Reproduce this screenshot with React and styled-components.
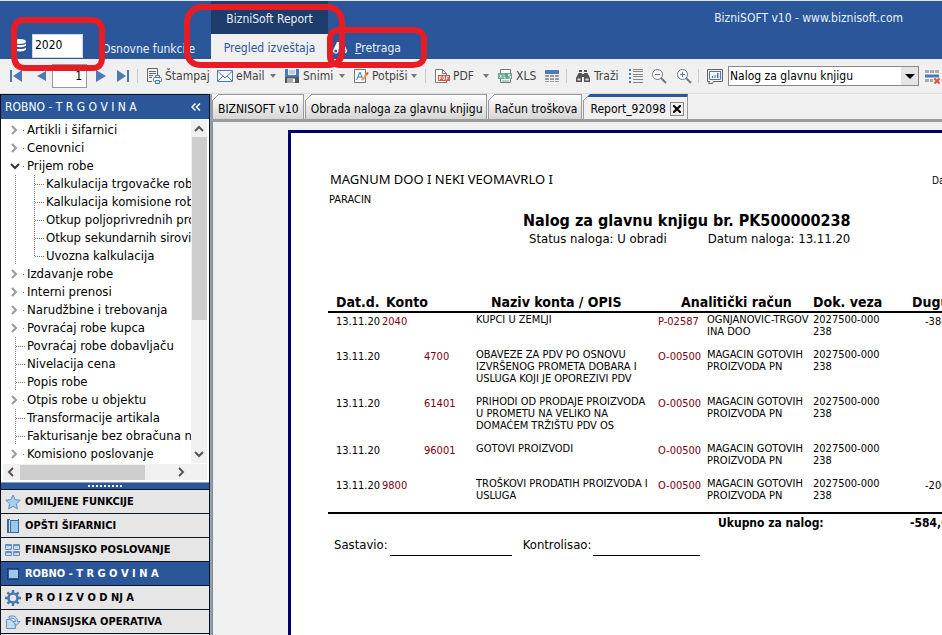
import React, { useState } from "react";
import styled, { createGlobalStyle } from "styled-components";

const treeItems = [
  { label: "Artikli i šifarnici", arrow: "right" },
  { label: "Cenovnici", arrow: "right" },
  { label: "Prijem robe", arrow: "down" },
  { label: "Kalkulacija trgovačke robe", child: true },
  { label: "Kalkulacija komisione robe", child: true },
  { label: "Otkup poljoprivrednih proizvoda", child: true },
  { label: "Otkup sekundarnih sirovina", child: true },
  { label: "Uvozna kalkulacija", child: true, last: true },
  { label: "Izdavanje robe", arrow: "right" },
  { label: "Interni prenosi", arrow: "right" },
  { label: "Narudžbine i trebovanja", arrow: "right" },
  { label: "Povraćaj robe kupca", arrow: "right" },
  { label: "Povraćaj robe dobavljaču" },
  { label: "Nivelacija cena" },
  { label: "Popis robe" },
  { label: "Otpis robe u objektu", arrow: "right" },
  { label: "Transformacije artikala" },
  { label: "Fakturisanje bez obračuna nabavke" },
  { label: "Komisiono poslovanje", arrow: "right" }
];

const modules = [
  { label: "OMILJENE FUNKCIJE", icon: "star" },
  { label: "OPŠTI ŠIFARNICI", icon: "book" },
  { label: "FINANSIJSKO POSLOVANJE", icon: "windows" },
  { label: "ROBNO - T R G O V I N A", icon: "square" },
  { label: "P R O I Z V O D NJ A", icon: "gear" },
  { label: "FINANSIJSKA OPERATIVA", icon: "pipe" }
];

const tabs = ["BIZNISOFT v10", "Obrada naloga za glavnu knjigu", "Račun troškova", "Report_92098"];

const pn = ["MAGACIN GOTOVIH", "PROIZVODA PN"];
const rows = [
  { konto: "2040", opis: ["KUPCI U ZEMLJI"], code: "P-02587", racun: ["OGNJANOVIC-TRGOV", "INA DOO"], duguje: "-384,000.00" },
  { konto: "4700", sub: true, opis: ["OBAVEZE ZA PDV PO OSNOVU", "IZVRŠENOG PROMETA DOBARA I", "USLUGA KOJI JE OPOREZIVI PDV"], code: "O-00500", racun: pn },
  { konto: "61401", sub: true, opis: ["PRIHODI OD PRODAJE PROIZVODA", "U PROMETU NA VELIKO NA", "DOMAĆEM TRŽIŠTU PDV OS"], code: "O-00500", racun: pn },
  { konto: "96001", sub: true, opis: ["GOTOVI PROIZVODI"], code: "O-00500", racun: pn },
  { konto: "9800", opis: ["TROŠKOVI PRODATIH PROIZVODA I", "USLUGA"], code: "O-00500", racun: pn, duguje: "-200,000.00" }
];

// every drawing sits on a 16x16 grid
const icons = {
  first: <path d="M2 2h2v12H2zM14 2v12L5 8z" fill="#4a7ab5" />,
  prev: <path d="M13 3v10L4 8z" fill="#4a7ab5" />,
  next: <path d="M3 2v12l10-6z" fill="#4a7ab5" />,
  last: <path d="M2 2v12l9-6zM12 2h2v12h-2z" fill="#4a7ab5" />,
  print: (
    <g fill="none" stroke="#666">
      <path d="M6 13.500H1.500v-13h10V7" />
      <path d="M3 3.500h7M3 5.500h7M3 7.500h4M3 9.500h3" />
      <g stroke="#4a7ab5">
        <path d="M9.500 9.500v-2h4v2" />
        <rect x="7.500" y="9.500" width="8" height="4" rx="1" fill="#fff" />
        <path d="M9.500 12.500h4v3h-4z" fill="#d9e6f5" />
      </g>
    </g>
  ),
  mail: (
    <g fill="#f5f9fd" stroke="#4a7ab5">
      <path d="M.5 2.500h15v11H.5z" />
      <path d="M.5 3 8 10l7.500-7M1 13l5-5M15 13l-5-5" fill="none" />
    </g>
  ),
  save: (
    <g>
      <path d="M1 1h14v14H1z" fill="#4a7ab5" />
      <path d="M4 1h8v6H4z" fill="#e8eff7" />
      <path d="M5 3h6M5 5h6" stroke="#8aa6c6" />
      <path d="M1 9h14v6H1z" fill="#555" />
      <path d="M3 10h8v5H3z" fill="#aaa" />
      <path d="M9 11h2v3H9z" fill="#fff" />
    </g>
  ),
  sign: (
    <g fill="none" stroke="#777">
      <path d="M1.500 1.500h11v13h-11z" fill="#f8f8f8" />
      <path d="m3.500 12 3.500-8 3 8M5 9h4" stroke="#4a7ab5" />
      <path d="m9 12 5-6" stroke="#e8a04c" strokeWidth="2" />
      <path d="m13.500 6.500 1.500-2" stroke="#d65536" strokeWidth="2" />
    </g>
  ),
  pdf: (
    <g>
      <path d="M1.500 14.500V1.500h7l4 4v9z" fill="#fff" stroke="#777" />
      <path d="M8.500 1.500v4h4" fill="none" stroke="#777" />
      <path d="M4 7h12v6H4z" fill="#d65540" />
      <path d="M5.500 12V8.500H7v2H5.500M9 8.500v3h1.500v-3zM12.500 12V8.500H15M12.500 10.200h2" fill="none" stroke="#fff" strokeWidth="0.800" />
    </g>
  ),
  xls: (
    <g>
      <path d="M3.500 6V1.500h10V6M3.500 11v3.500h10V11" fill="#fff" stroke="#777" />
      <path d="M1 5h14v6H1z" fill="#61a58a" />
      <path d="m2.500 6.500 2.500 3.500M5 6.500 2.500 10M7 6.500V10h2M13.500 6.500h-2V8h2v2h-2" fill="none" stroke="#fff" strokeWidth="0.800" />
      <path d="M5 13h7" stroke="#61a58a" />
    </g>
  ),
  table: (
    <g>
      <path d="M1 2h14v4H1z" fill="#4a7ab5" />
      <path d="M1 7h4v2H1zM6 7h4v2H6zM11 7h4v2h-4zM1 10h4v2H1zM6 10h4v2H6zM11 10h4v2h-4zM1 13h4v1H1zM6 13h4v1H6zM11 13h4v1h-4z" fill="#999" />
    </g>
  ),
  find: (
    <g>
      <path d="M4 2h3v2H4zM9 2h3v2H9zM3.500 5H7v9H1v-4zM12.500 5H9v9h6v-4zM7 6h2v3H7z" fill="#555" />
      <path d="M2.500 10.500h3v2h-3zM10.500 10.500h3v2h-3z" fill="#ddd" />
    </g>
  ),
  list: (
    <g>
      <path d="M1 1h2v2H1zM1 5h2v2H1zM1 9h2v2H1zM1 13h2v2H1z" fill="#4a7ab5" />
      <path d="M5 1.500h10M5 3.500h10M5 6.500h10M5 8.500h10M5 11.500h10M5 14.500h10" stroke="#888" />
    </g>
  ),
  zoomOut: (
    <g fill="none" stroke="#777">
      <circle cx="6.500" cy="6.500" r="5" fill="#f8f8f8" />
      <path d="m10 10 5 5" strokeWidth="2" />
      <path d="M4 6.500h5" stroke="#4a7ab5" />
    </g>
  ),
  zoomIn: (
    <g fill="none" stroke="#777">
      <circle cx="6.500" cy="6.500" r="5" fill="#f8f8f8" />
      <path d="m10 10 5 5" strokeWidth="2" />
      <path d="M4 6.500h5M6.500 4v5" stroke="#4a7ab5" />
    </g>
  ),
  chart: (
    <g fill="none" stroke="#666">
      <path d="M.5 1.500h15v12h-9l-1 2h-4l1-2h-2z" />
      <path d="M2.500 3.500h11v8h-11z" stroke="#4a7ab5" fill="#f5f9fd" />
      <path d="M5 8h1v2H5zM7.500 7h1v3h-1zM10 5h1.500v5H10z" fill="#4a7ab5" stroke="none" />
    </g>
  ),
  rowsRemove: (
    <g>
      <path d="M1 2h4v3H1zM6 2h4v3H6zM11 2h4v3h-4zM1 11h4v3H1zM6 11h3v3H6z" fill="#aaa" />
      <path d="M1 6.500h14v3H1z" fill="#4a7ab5" />
      <path d="m10.500 10.500 5 5M15.500 10.500l-5 5" stroke="#d65540" strokeWidth="2" />
    </g>
  ),
  star: (
    <path d="m8 1 2.200 4.600 5 .7-3.700 3.500.9 5L8 12.400l-4.400 2.400.9-5L.8 6.300l5-.7z" fill="#a8cdf0" stroke="#5f8fc0" />
  ),
  book: (
    <g>
      <path d="M2 1h12v14H2z" fill="#3c6797" />
      <path d="M4 2h1v12H4z" fill="#dbe9f7" />
      <path d="M6 3h7v11H6z" fill="#9cc7ee" />
      <path d="M5 1h8v1H5z" fill="#dbe9f7" />
    </g>
  ),
  windows: (
    <g fill="#c2dbf3" stroke="#6590bd">
      <path d="M.5 2.500h6v5h-6zM8.500 2.500h6v5h-6zM.5 9.500h6v4h-6zM8.500 9.500h6v4h-6z" />
      <path d="M.5 3.500h6M8.500 3.500h6M.5 10.500h6M8.500 10.500h6" />
    </g>
  ),
  square: (
    <g>
      <path d="M2.500 2.500h11v11h-11z" fill="none" stroke="#162f57" strokeDasharray="2 1" />
      <path d="M4 4h9v8H4z" fill="#9cc7ee" />
    </g>
  ),
  gear: (
    <g fill="none" stroke="#4479b0">
      <circle cx="8" cy="8" r="4.500" strokeWidth="2.500" />
      <path d="M8 0v3M8 13v3M0 8h3M13 8h3M2.400 2.400l2 2M11.600 11.600l2 2M13.600 2.400l-2 2M4.400 11.600l-2 2" strokeWidth="2.500" />
    </g>
  ),
  pipe: (
    <g fill="#c2dbf3" stroke="#6590bd">
      <path d="M1.500 5.500h3q6 1 6 9h-9z" />
      <path d="M4 2.500c5-2 8.500 1 8.500 5H15l-3.500 4-3.500-4h2.500c0-2.500-2.500-4-6.500-3z" />
    </g>
  )
};

const Icon = ({ name }) => (
  <Glyph viewBox="0 0 16 16" aria-hidden="true">
    {icons[name]}
  </Glyph>
);

const Tool = ({ icon, label, caret, width }) => (
  <ToolButton type="button" $width={width} aria-label={label || icon}>
    <Icon name={icon} />
    {label && <span>{label}</span>}
    {caret && <Caret />}
  </ToolButton>
);

const Lines = ({ list }) => list.map(line => <div key={line}>{line}</div>);

const Chevron = ({ dir }) => {
  const paths = { right: "m2 1 4 4-4 4", down: "m1 3 4 4 4-4", left: "M7 1 3 5l4 4", up: "m1 7 4-4 4 4" };
  return (
    <ChevronSvg viewBox="0 0 10 10" aria-hidden="true">
      <path d={paths[dir]} />
    </ChevronSvg>
  );
};

const Header = () => (
  <Ribbon>
    <YearBox>
      <svg width="14" height="14" viewBox="0 0 14 14" fill="#fff" aria-hidden="true">
        <ellipse cx="6" cy="2.500" rx="6" ry="2.500" />
        <path d="M0 4.500c2 2 10 2 12 0v2c-2 2.300-10 2.300-12 0zM0 8.500c2 2 10 2 12 0v2c-2 2.600-10 2.600-12 0z" />
      </svg>
      <YearSelect aria-label="Godina" defaultValue="2020">
        <option>2020</option>
      </YearSelect>
    </YearBox>
    <RibbonLink href="#osnovne">Osnovne funkcije</RibbonLink>
    <ReportGroup>
      <GroupName>BizniSoft Report</GroupName>
      <ActiveRibbon type="button">Pregled izveštaja</ActiveRibbon>
    </ReportGroup>
    <SearchLink href="#pretraga">
      <svg width="14" height="14" viewBox="0 0 14 14" aria-hidden="true">
        <path d="M4 1h2v4h2V1h2l4 8.500a2.800 2.800 0 0 1-5.500 1V8h-3v2.500A2.800 2.800 0 0 1 0 9.500z" fill="#fff" />
        <circle cx="2.800" cy="10" r="1.500" fill="#2b579a" />
        <circle cx="11.200" cy="10" r="1.500" fill="#2b579a" />
      </svg>
      <span>
        <u>P</u>retraga
      </span>
    </SearchLink>
    <AppTitle>BizniSOFT v10 - www.biznisoft.com</AppTitle>
  </Ribbon>
);

const Tools = () => (
  <Toolbar>
    <Tool icon="first" width={25} />
    <Tool icon="prev" width={19} />
    <PageInput aria-label="Strana" defaultValue="1" />
    <Tool icon="next" width={22} />
    <Tool icon="last" width={22} />
    <Separator />
    <Tool icon="print" label="Štampaj" width={71} />
    <Tool icon="mail" label="eMail" width={67} caret />
    <Tool icon="save" label="Snimi" width={69} caret />
    <Tool icon="sign" label="Potpiši" width={72} caret />
    <Separator />
    <Tool icon="pdf" label="PDF" width={63} caret />
    <Tool icon="xls" label="XLS" width={47} />
    <Tool icon="table" width={22} />
    <Separator />
    <Tool icon="find" label="Traži" width={53} />
    <Tool icon="list" width={23} />
    <Tool icon="zoomOut" width={25} />
    <Tool icon="zoomIn" width={22} />
    <Separator />
    <Tool icon="chart" width={21} />
    <ReportSelectBox>
      <ReportSelect aria-label="Izveštaj" defaultValue="Nalog za glavnu knjigu">
        <option>Nalog za glavnu knjigu</option>
      </ReportSelect>
      <SelectArrow />
    </ReportSelectBox>
    <Tool icon="rowsRemove" width={18} />
  </Toolbar>
);

const Sidebar = () => {
  const [active, setActive] = useState("square");

  return (
    <Side>
      <SideTitle>
        ROBNO - T R G O V I N A
        <CollapseButton type="button" aria-label="Skupi">
          <svg width="10" height="8" viewBox="0 0 10 8" fill="none" stroke="#fff" strokeWidth="1.500">
            <path d="M4.500.5 1 4l3.500 3.500M9 .5 5.500 4 9 7.500" />
          </svg>
        </CollapseButton>
      </SideTitle>
      <TreeBox>
        <Tree>
          {treeItems.map(item => (
            <TreeRow key={item.label}>
              <Branch $open={!item.arrow}>
                {item.arrow && (
                  <Toggle type="button" $open={item.arrow === "down"} aria-label={item.label}>
                    <Chevron dir={item.arrow} />
                  </Toggle>
                )}
                {!item.child && <Stub $short={!!item.arrow} />}
              </Branch>
              {item.child && <ChildBranch $last={item.last} />}
              <TreeLabel>{item.label}</TreeLabel>
            </TreeRow>
          ))}
        </Tree>
        <VScroll>
          <Chevron dir="up" />
          <VThumb />
          <Chevron dir="down" />
        </VScroll>
        <HScroll>
          <Chevron dir="left" />
          <HThumb />
          <Chevron dir="right" />
        </HScroll>
      </TreeBox>
      <Splitter>
        <Grip />
      </Splitter>
      <nav>
        {modules.map(({ label, icon }) => (
          <ModuleButton key={icon} type="button" $active={icon === active} onClick={() => setActive(icon)}>
            <Icon name={icon} />
            {label}
          </ModuleButton>
        ))}
      </nav>
      <SideRest />
    </Side>
  );
};

const Report = () => (
  <Paper>
    <CompanyRow>
      <Company>MAGNUM DOO I NEKI VEOMAVRLO I</Company>
      <PrintDate>Datum:</PrintDate>
    </CompanyRow>
    <City>PARACIN</City>
    <ReportTitle>Nalog za glavnu knjigu br. PK500000238</ReportTitle>
    <StatusRow>
      <span>Status naloga: U obradi</span>
      <span>Datum naloga: 13.11.20</span>
    </StatusRow>
    <Ledger>
      <colgroup>
        <Col $width={54} />
        <Col $width={94} />
        <Col $width={182} />
        <Col $width={49} />
        <Col $width={106} />
        <Col $width={80} />
        <Col $width={90} />
      </colgroup>
      <thead>
        <tr>
          <Th $pad={8}>Dat.d.</Th>
          <Th $pad={4}>Konto</Th>
          <Th $pad={15}>Naziv konta / OPIS</Th>
          <Th $pad={23} colSpan={2}>Analitički račun</Th>
          <Th>Dok. veza</Th>
          <Th $pad={19}>Duguje</Th>
        </tr>
      </thead>
      <tbody>
        {rows.map(row => (
          <tr key={row.konto}>
            <Td $pad={8} $low>13.11.20</Td>
            <Td $pad={row.sub ? 42 : 0} $low $red>{row.konto}</Td>
            <Td><Lines list={row.opis} /></Td>
            <Td $low $red>{row.code}</Td>
            <Td><Lines list={row.racun} /></Td>
            <Td><Lines list={["2027500-000", "238"]} /></Td>
            <Td $pad={32} $low>{row.duguje}</Td>
          </tr>
        ))}
      </tbody>
      <tfoot>
        <tr>
          <TotalCell colSpan={5} $pad={390}>Ukupno za nalog:</TotalCell>
          <TotalCell colSpan={2} $pad={97}>-584,000.00</TotalCell>
        </tr>
      </tfoot>
    </Ledger>
    <Signatures>
      <span>Sastavio:</span>
      <SignLine $width={122} />
      <span>Kontrolisao:</span>
      <SignLine $width={107} />
    </Signatures>
  </Paper>
);

const App = () => {
  const [current, setCurrent] = useState(3);

  return (
    <Shell>
      <GlobalStyle />
      <Header />
      <Tools />
      <Body>
        <Sidebar />
        <Main>
          <TabBar role="tablist">
            {tabs.map((tab, i) => (
              <Tab key={tab} $active={i === current}>
                <TabButton type="button" role="tab" aria-selected={i === current} onClick={() => setCurrent(i)}>
                  {tab}
                </TabButton>
                {i === current && (
                  <CloseButton type="button" aria-label="Zatvori">
                    <svg width="8" height="8" viewBox="0 0 8 8" stroke="#000" strokeWidth="2">
                      <path d="m0 0 8 8M8 0 0 8" />
                    </svg>
                  </CloseButton>
                )}
              </Tab>
            ))}
          </TabBar>
          <Desk>
            <Report />
          </Desk>
        </Main>
      </Body>
      <Marks viewBox="0 0 440 80" aria-hidden="true">
        <path d="M23 20h68q10 0 11 9v30q-1 9-9 9H25q-10 0-11-11V30q0-9 9-10z" />
        <path d="M202 7h125q12 0 15 13v34q-2 11-14 11H201q-12 0-14-12V21q2-13 15-14z" />
        <path d="M339 30h74q9 0 11 7v21q-2 7-11 7h-74q-9-1-9-9V38q1-8 9-8z" />
      </Marks>
    </Shell>
  );
};

export default App;

const GlobalStyle = createGlobalStyle`
  *, *::before, *::after {
    box-sizing: border-box;
  }
  body {
    margin: 0;
    font-family: "DejaVu Sans Condensed", "DejaVu Sans", Tahoma, sans-serif;
    font-size: 12px;
    color: #000;
  }
  button, input, select {
    font: inherit;
    color: inherit;
    margin: 0;
    padding: 0;
    border: 0;
    border-radius: 0;
    background: none;
  }
  button {
    cursor: pointer;
  }
`;

const Shell = styled.div`
  position: relative;
  display: flex;
  flex-direction: column;
  height: 100vh;
  overflow: hidden;
  background: #f0f0f0;
`;

const Ribbon = styled.header`
  display: flex;
  align-items: flex-end;
  flex-shrink: 0;
  height: 59px;
  border-top: 1px solid #dfe6ee;
  background: #2b579a;
  color: #e9f0fa;
`;

const YearBox = styled.div`
  display: flex;
  align-items: center;
  gap: 4px;
  width: 102px;
  padding: 0 0 1px 14px;
`;

const YearSelect = styled.select`
  appearance: none;
  width: 51px;
  height: 24px;
  padding: 0 2px 2px;
  border: 1px solid #cdd8e8;
  background: #fff;
  color: #000;
`;

const RibbonLink = styled.a`
  width: 109px;
  padding-bottom: 3px;
  color: inherit;
  text-decoration: none;
  white-space: nowrap;
`;

const ReportGroup = styled.div`
  display: flex;
  flex-direction: column;
  align-self: stretch;
  width: 117px;
  background: #1e3c6c;
  text-align: center;
`;

const GroupName = styled.span`
  padding-top: 3px;
  line-height: 30px;
`;

const ActiveRibbon = styled.button`
  flex: 1;
  padding-top: 3px;
  background: #f0f0f0;
  color: #2b579a;
`;

const SearchLink = styled.a`
  display: flex;
  align-items: center;
  gap: 8px;
  padding: 0 0 4px 5px;
  color: inherit;
  text-decoration: none;
`;

const AppTitle = styled.div`
  align-self: flex-start;
  margin-left: auto;
  padding: 10px 39px 0 0;
`;

const Toolbar = styled.div`
  display: flex;
  align-items: center;
  flex-shrink: 0;
  height: 35px;
  padding-left: 8px;
  border-bottom: 1px solid #dcdcdc;
  color: #444;
`;

const Glyph = styled.svg`
  flex-shrink: 0;
  width: 16px;
  height: 16px;
`;

const ToolButton = styled.button`
  display: flex;
  align-items: center;
  flex-shrink: 0;
  gap: 3px;
  width: ${props => props.$width}px;
  height: 24px;
  white-space: nowrap;
`;

const Caret = styled.i`
  margin: 0 8px 0 auto;
  border: 3px solid transparent;
  border-top: 4px solid #777;
  border-bottom: 0;
`;

const Separator = styled.i`
  flex-shrink: 0;
  width: 1px;
  height: 14px;
  margin-right: 8px;
  background: #ccc;
`;

const PageInput = styled.input`
  flex-shrink: 0;
  width: 35px;
  height: 24px;
  margin-right: 6px;
  padding-right: 4px;
  border: 1px solid #999;
  background: #fff;
  color: #000;
  text-align: right;
`;

const ReportSelectBox = styled.div`
  display: flex;
  flex: 1;
  height: 20px;
  margin-right: 5px;
  border: 1px solid #888;
  background: #fff;
`;

const ReportSelect = styled.select`
  appearance: none;
  flex: 1;
  min-width: 0;
  padding: 0 1px;
  color: #000;
`;

const SelectArrow = styled.i`
  width: 17px;
  background: #e4e4e4;

  &::before {
    content: "";
    display: block;
    width: 0;
    margin: 7px auto;
    border: 5px solid transparent;
    border-top-color: #000;
    border-bottom: 0;
  }
`;

const Body = styled.div`
  display: flex;
  flex: 1;
  min-height: 0;
`;

const Side = styled.aside`
  display: flex;
  flex-direction: column;
  flex-shrink: 0;
  width: 210px;
  border: 1px solid #0b1220;
  border-bottom: 0;
  background: #2b579a;
`;

const SideTitle = styled.div`
  display: flex;
  align-items: center;
  justify-content: space-between;
  flex-shrink: 0;
  height: 24px;
  padding: 0 8px 0 4px;
  color: #fff;
  white-space: pre;
`;

const CollapseButton = styled.button`
  display: flex;
  color: #fff;
`;

const TreeBox = styled.div`
  display: grid;
  grid-template-columns: 1fr 16px;
  grid-template-rows: 1fr 16px;
  flex-shrink: 0;
  row-gap: 1px;
  padding: 1px 2px 2px;
  border-bottom: 1px solid #8c9cb4;
  background: #fff;
`;

const Tree = styled.ul`
  min-width: 0;
  margin: 0;
  padding: 1px 0 0 5px;
  overflow: hidden;
  list-style: none;
  font-size: 13px;
`;

const TreeRow = styled.li`
  display: flex;
  height: 18px;
  line-height: 18px;
  white-space: nowrap;
`;

const Branch = styled.span`
  display: flex;
  align-items: center;
  flex-shrink: 0;
  width: 19px;
  background: ${props =>
    props.$open
      ? "repeating-linear-gradient(#777 0 1px, transparent 1px 2px) 7px 0 / 1px 100% no-repeat"
      : "none"};
`;

const Toggle = styled.button`
  display: flex;
  width: 14px;
  padding-left: 2px;
  color: ${props => (props.$open ? "#333" : "#999")};
`;

const Stub = styled.i`
  width: ${props => (props.$short ? "1px" : "9px")};
  height: 1px;
  margin-left: ${props => (props.$short ? "1px" : "8px")};
  background: repeating-linear-gradient(90deg, #777 0 1px, transparent 1px 2px);
`;

const ChildBranch = styled.span`
  flex-shrink: 0;
  width: 19px;
  background:
    repeating-linear-gradient(#777 0 1px, transparent 1px 2px) 7px 0 / 1px ${props => (props.$last ? "9px" : "18px")} no-repeat,
    repeating-linear-gradient(90deg, #777 0 1px, transparent 1px 2px) 8px 9px / 9px 1px no-repeat;
`;

const TreeLabel = styled.span`
  flex-shrink: 0;
`;

const ChevronSvg = styled.svg`
  flex-shrink: 0;
  width: 10px;
  height: 10px;
  fill: none;
  stroke: currentColor;
  stroke-width: 2;
`;

const VScroll = styled.div`
  display: flex;
  flex-direction: column;
  align-items: center;
  padding: 4px 0;
  background: #f0f0f0;
  color: #555;
`;

const VThumb = styled.i`
  width: 15px;
  height: 183px;
  margin: 3px 0 auto;
  background: #cdcdcd;
`;

const HScroll = styled.div`
  display: flex;
  align-items: center;
  grid-column: 1 / -1;
  padding: 0 20px 0 3px;
  background: #f0f0f0;
  color: #555;
`;

const HThumb = styled.i`
  width: 125px;
  height: 15px;
  margin: 0 auto 0 4px;
  background: #cdcdcd;
`;

const Splitter = styled.div`
  display: flex;
  align-items: center;
  justify-content: center;
  flex-shrink: 0;
  height: 7px;
  border-bottom: 1px solid #0b1220;
`;

const Grip = styled.i`
  width: 35px;
  height: 2px;
  background: repeating-linear-gradient(90deg, #fff 0 2px, transparent 2px 4px);
`;

const ModuleButton = styled.button`
  display: flex;
  align-items: center;
  gap: 4px;
  width: 100%;
  height: 24px;
  padding-left: 4px;
  border-bottom: 1px solid #0b1220;
  background: ${props => (props.$active ? "#2b579a" : "#e6e6e6")};
  color: ${props => (props.$active ? "#fff" : "#000")};
  font-size: 11px;
  font-weight: bold;
  white-space: pre;
`;

const SideRest = styled.div`
  flex: 1;
  background: #e6e6e6;
`;

const Main = styled.main`
  display: flex;
  flex: 1;
  flex-direction: column;
  min-width: 0;
  border-left: 2px solid #8f9fb8;
`;

const TabBar = styled.div`
  display: flex;
  flex-shrink: 0;
  gap: 1px;
  height: 28px;
  border-bottom: 3px solid #9a9a9a;
`;

const Tab = styled.div`
  position: relative;
  display: flex;
  align-items: center;
  gap: 4px;
  padding: ${props => (props.$active ? "1px 3px 0 6px" : "4px 4px 0 5px")};
  border: 1px solid #999;
  border-bottom: 0;
  border-top: ${props => (props.$active ? "3px solid #2b579a" : "1px solid #999")};
  background: ${props => (props.$active ? "#f0f0f0" : "linear-gradient(#fdfdfd, #d6d6d6)")};
  white-space: nowrap;

  /* cut corner */
  &::before {
    content: "";
    position: absolute;
    top: ${props => (props.$active ? "-3px" : "-1px")};
    left: -1px;
    width: 7px;
    height: 7px;
    background: linear-gradient(135deg, #f0f0f0 43%, #999 43% 57%, transparent 57%);
  }
`;

const TabButton = styled.button`
  height: 20px;
`;

const CloseButton = styled.button`
  display: flex;
  align-items: center;
  justify-content: center;
  width: 14px;
  height: 14px;
  border: 1px solid #888;
`;

const Desk = styled.div`
  flex: 1;
  min-height: 0;
  padding: 8px 0 0 75px;
  overflow: hidden;
  border-left: 1px solid #888;
`;

const Paper = styled.article`
  width: 760px;
  height: 1080px;
  padding: 38px 36px 0 37px;
  border: 3px solid #00006e;
  background: #fff;
`;

const CompanyRow = styled.div`
  display: flex;
  align-items: baseline;
  padding-left: 2px;
  line-height: 17px;
`;

const Company = styled.div`
  width: 602px;
  font-family: "Noto Sans", Tahoma, sans-serif;
  font-size: 13px;
`;

const PrintDate = styled.div`
  font-size: 10px;
`;

const City = styled.div`
  padding: 3px 0 0 1px;
  font-size: 11px;
  line-height: 15px;
`;

const ReportTitle = styled.h1`
  margin: 4px 0 0 195px;
  font-size: 16px;
  line-height: 20px;
`;

const StatusRow = styled.div`
  display: flex;
  gap: 41px;
  margin-left: 201px;
  font-size: 13px;
  line-height: 16px;
`;

const Ledger = styled.table`
  width: 655px;
  margin-top: 47px;
  border-collapse: separate;
  border-spacing: 0;
  table-layout: fixed;
`;

const Col = styled.col`
  width: ${props => props.$width}px;
`;

const Th = styled.th`
  padding: 0 0 0 ${props => props.$pad || 0}px;
  border-bottom: 2px solid #000;
  font-size: 14px;
  line-height: 17px;
  text-align: left;
  white-space: nowrap;
`;

const Td = styled.td`
  padding: ${props => (props.$low ? 3 : 1)}px 0 10px ${props => props.$pad || 0}px;
  color: ${props => (props.$red ? "#7a0010" : "#000")};
  font-size: 11px;
  line-height: 12px;
  vertical-align: top;
  white-space: nowrap;
`;

const TotalCell = styled.td`
  padding: 1px 0 0 ${props => props.$pad}px;
  border-top: 2px solid #000;
  font-weight: bold;
  line-height: 17px;
  white-space: nowrap;
`;

const Signatures = styled.div`
  display: flex;
  align-items: flex-start;
  margin: 6px 0 0 6px;
  font-size: 13px;
  line-height: 14px;
`;

const SignLine = styled.i`
  width: ${props => props.$width}px;
  height: 18px;
  margin: 0 11px 0 2px;
  border-bottom: 1px solid #000;
`;

/* hand-drawn callouts over the ribbon */
const Marks = styled.svg`
  position: absolute;
  top: 0;
  left: 0;
  width: 440px;
  height: 80px;
  fill: none;
  stroke: #e81c24;
  stroke-width: 6;
  pointer-events: none;
`;
